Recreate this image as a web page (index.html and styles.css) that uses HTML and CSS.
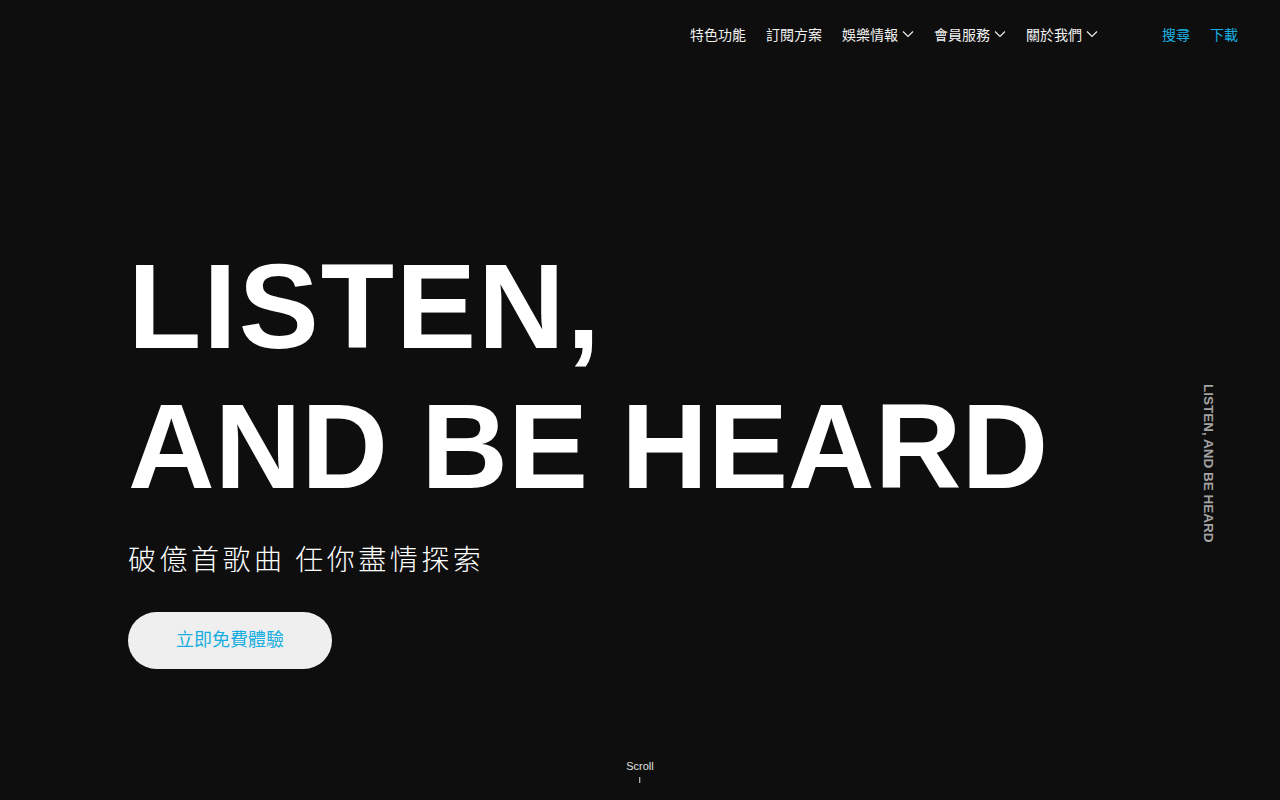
FILE: index.html
```html
<!DOCTYPE html>
<html lang="zh-Hant">
<head>
<meta charset="utf-8">
<title>LISTEN, AND BE HEARD</title>
<link rel="stylesheet" href="styles.css">
</head>
<body>
<div class="page">
  <header class="topbar">
    <nav class="menu">
      <a class="menu-item" href="#">特色功能</a>
      <a class="menu-item" href="#">訂閱方案</a>
      <a class="menu-item" href="#">娛樂情報<svg class="chev" viewBox="0 0 12 8" width="12" height="8"><polyline points="1,1.5 6,6.5 11,1.5"/></svg></a>
      <a class="menu-item" href="#">會員服務<svg class="chev" viewBox="0 0 12 8" width="12" height="8"><polyline points="1,1.5 6,6.5 11,1.5"/></svg></a>
      <a class="menu-item" href="#">關於我們<svg class="chev" viewBox="0 0 12 8" width="12" height="8"><polyline points="1,1.5 6,6.5 11,1.5"/></svg></a>
    </nav>
    <div class="actions">
      <a class="action" href="#">搜尋</a>
      <a class="action" href="#">下載</a>
    </div>
  </header>
  <main class="hero">
    <h1 class="headline"><span class="line-one">LISTEN,</span><br>AND BE HEARD</h1>
    <p class="subtitle">破億首歌曲 任你盡情探索</p>
    <a class="cta" href="#">立即免費體驗</a>
    <div class="side-text">LISTEN, AND BE HEARD</div>
    <div class="scroll">
      <span class="scroll-label">Scroll</span>
      <span class="scroll-line"></span>
    </div>
  </main>
</div>
</body>
</html>
```
FILE: styles.css
```css
html, body {
  margin: 0;
  padding: 0;
  background: #0e0e0e;
}
body {
  font-family: "Liberation Sans", "Noto Sans CJK TC", sans-serif;
  color: #fff;
  overflow: hidden;
}
a { text-decoration: none; }
.page {
  position: relative;
  width: 1280px;
  height: 800px;
}
.topbar {
  height: 68px;
  display: flex;
  justify-content: flex-end;
  align-items: center;
  padding-right: 42px;
  font-family: "Noto Sans CJK TC", sans-serif;
  font-size: 14px;
}
.menu {
  display: flex;
  align-items: center;
  gap: 20px;
}
.menu-item {
  color: #f2f2f2;
  display: flex;
  align-items: center;
  gap: 4px;
  line-height: 20px;
}
.chev {
  fill: none;
  stroke: #f2f2f2;
  stroke-width: 1.1;
}
.actions {
  display: flex;
  gap: 20px;
  margin-left: 64px;
}
.action {
  color: #19b0e2;
  line-height: 20px;
}
.hero {
  padding-left: 128px;
  padding-top: 168px;
}
.headline {
  margin: 0;
  font-family: "Liberation Sans", Arial, sans-serif;
  font-weight: 700;
  font-size: 120px;
  line-height: 140px;
  color: #fff;
}
.line-one {
  letter-spacing: 2px;
}
.subtitle {
  margin: 22px 0 0;
  font-family: "Noto Sans CJK TC", sans-serif;
  font-weight: 300;
  font-size: 28px;
  line-height: 40px;
  letter-spacing: 3.5px;
  color: #fff;
}
.cta {
  margin-top: 34px;
  display: inline-flex;
  align-items: center;
  box-sizing: border-box;
  height: 57px;
  padding: 0 48px 5px;
  border-radius: 29px;
  background: #efefef;
  color: #19aee0;
  font-family: "Noto Sans CJK TC", sans-serif;
  font-size: 18px;
}
.side-text {
  position: absolute;
  top: 384px;
  right: 64px;
  writing-mode: vertical-rl;
  font-family: "Liberation Sans", Arial, sans-serif;
  font-weight: 700;
  font-size: 13.5px;
  line-height: 16px;
  color: #a4a4a4;
}
.scroll {
  position: absolute;
  top: 759px;
  left: 50%;
  transform: translateX(-50%);
  display: flex;
  flex-direction: column;
  align-items: center;
  gap: 4px;
}
.scroll-label {
  font-family: "Liberation Sans", Arial, sans-serif;
  font-size: 11px;
  line-height: 14px;
  color: #e0e0e0;
}
.scroll-line {
  width: 1px;
  height: 6px;
  background: #ddd;
}
```
